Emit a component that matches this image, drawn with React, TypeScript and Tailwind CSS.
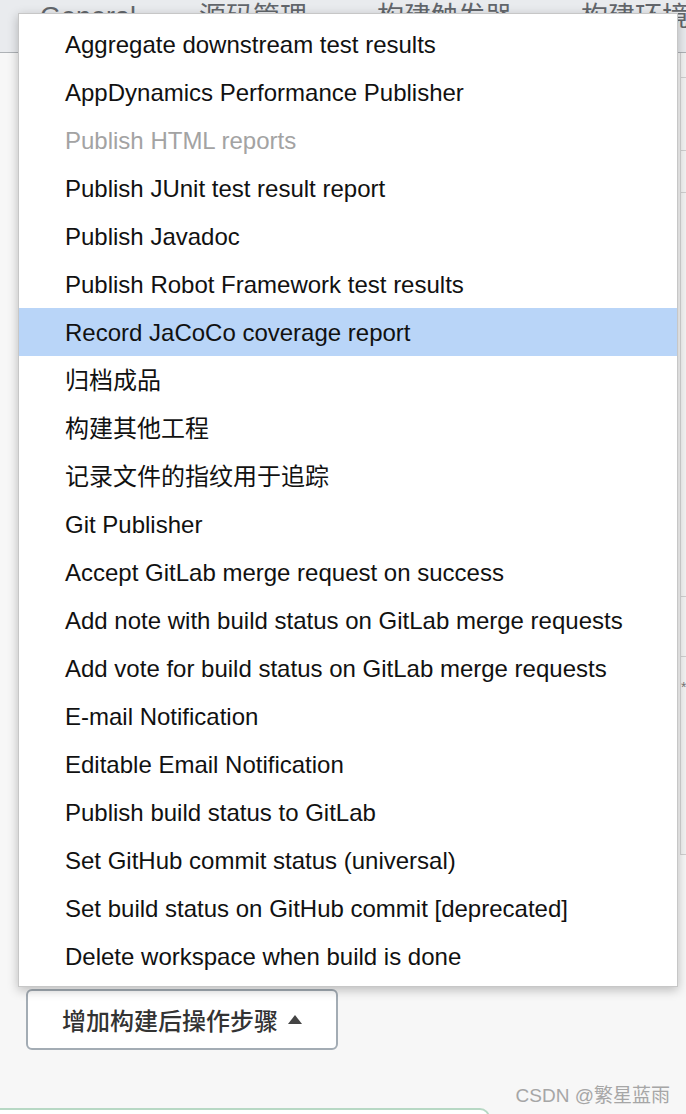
import React from "react";

const items: { label: string; disabled?: boolean; active?: boolean }[] = [
  { label: "Aggregate downstream test results" },
  { label: "AppDynamics Performance Publisher" },
  { label: "Publish HTML reports", disabled: true },
  { label: "Publish JUnit test result report" },
  { label: "Publish Javadoc" },
  { label: "Publish Robot Framework test results" },
  { label: "Record JaCoCo coverage report", active: true },
  { label: "归档成品" },
  { label: "构建其他工程" },
  { label: "记录文件的指纹用于追踪" },
  { label: "Git Publisher" },
  { label: "Accept GitLab merge request on success" },
  { label: "Add note with build status on GitLab merge requests" },
  { label: "Add vote for build status on GitLab merge requests" },
  { label: "E-mail Notification" },
  { label: "Editable Email Notification" },
  { label: "Publish build status to GitLab" },
  { label: "Set GitHub commit status (universal)" },
  { label: "Set build status on GitHub commit [deprecated]" },
  { label: "Delete workspace when build is done" },
];

const font = { fontFamily: '"Liberation Sans", Arial, "Noto Sans CJK SC", sans-serif' };

export default function App() {
  return (
    <div
      className="relative w-[686px] h-[1114px] overflow-hidden bg-[#f7f7f7]"
      style={font}
    >
      {/* tab bar */}
      <div className="h-[53px] bg-[#e9ebee] border-b border-[#aeb2b6] overflow-hidden">
        <div className="flex mt-[4px] text-[27px] leading-[27px] text-[#62666b] whitespace-nowrap">
          <span className="ml-[40px]">General</span>
          <span className="ml-[63px]">源码管理</span>
          <span className="ml-[70px]">构建触发器</span>
          <span className="ml-[69px]">构建环境</span>
        </div>
      </div>

      {/* background form (mostly hidden) */}
      <div className="flex">
        <div className="w-[680px] shrink-0" />
        <div className="flex-1 border-l border-[#d5d5d5] bg-[#f3f3f3]">
          <div className="h-[25px] border-b border-[#cfcfcf]" />
          <div className="h-[73px] border-b border-[#cfcfcf]" />
          <div className="h-[42px] border-b border-[#cfcfcf]" />
          <div className="h-[404px] border-b border-[#cfcfcf]" />
          <div className="h-[60px] border-b border-[#cfcfcf]" />
          <div className="h-[198px] border-b border-[#cfcfcf] pt-[20px] text-[#777] text-[14px]">*</div>
        </div>
      </div>

      {/* add post-build step button */}
      <div className="absolute left-[26px] top-[989px]">
        <button className="flex items-center w-[312px] h-[61px] pl-[34px] bg-white border-2 border-[#a3acb4] rounded-[6px] text-[24px] font-medium text-[#333]">
          <span style={{ fontFamily: '"Noto Sans CJK SC", sans-serif' }}>增加构建后操作步骤</span>
          <svg className="ml-[10px]" width="14" height="9" viewBox="0 0 14 9">
            <path d="M7 0 L14 9 L0 9 Z" fill="#444" />
          </svg>
        </button>
      </div>

      {/* watermark */}
      <div
        className="absolute right-[16px] top-[1082px] text-[19px] text-[#a6a6a6]"
        style={{ fontFamily: '"Liberation Sans", "Noto Sans CJK SC", sans-serif' }}
      >
        CSDN @繁星蓝雨
      </div>

      {/* green box top edge */}
      <div className="absolute left-[-10px] top-[1108px] w-[500px] h-[40px] border-2 border-[#b7d8c4] rounded-[10px] bg-white" />

      {/* dropdown menu */}
      <div className="absolute left-[18px] top-[13px] w-[660px] bg-white border border-[#c7c7c7] py-[6px] shadow-[0_3px_10px_rgba(0,0,0,0.25)]">
        {items.map((it) => (
          <div
            key={it.label}
            className={
              "h-[48px] flex items-center pl-[46px] pt-[2px] text-[24px] whitespace-nowrap " +
              (it.active ? "bg-[#b9d5f8] " : "") +
              (it.disabled ? "text-[#a3a3a3]" : "text-[#111]")
            }
            style={font}
          >
            {it.label}
          </div>
        ))}
      </div>
    </div>
  );
}
